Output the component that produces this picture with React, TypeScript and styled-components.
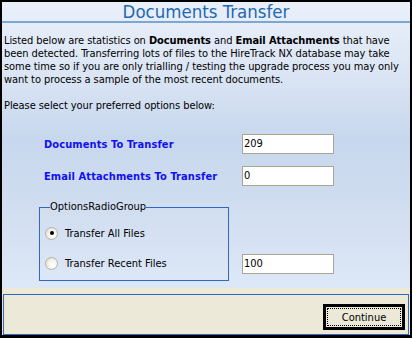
import React from "react";
import styled, { createGlobalStyle } from "styled-components";

const Global = createGlobalStyle`
  html, body { margin: 0; padding: 0; background: #000; }
  body { overflow: hidden; }
  * { box-sizing: border-box; }
`;

const FONT = `"DejaVu Sans Condensed", "Liberation Sans", sans-serif`;

const Window = styled.div`
  width: 412px;
  height: 338px;
  border-style: solid;
  border-color: #000;
  border-width: 2px 2px 3px 2px;
  display: flex;
  flex-direction: column;
  font-family: ${FONT};
  font-size: 11px;
  color: #000;
`;

const Main = styled.div`
  flex: 1;
  display: flex;
  flex-direction: column;
  background: linear-gradient(
    to bottom,
    #eaf0fa 0%,
    #dbe5f4 25%,
    #c7d7ed 48%,
    #d0ddf0 70%,
    #dde8f7 100%
  );
`;

const Header = styled.div`
  height: 19px;
  display: flex;
  align-items: center;
  justify-content: center;
  font-size: 18.5px;
  line-height: 19px;
  color: #2268b2;
`;

const Rule = styled.div`
  height: 2px;
  background: #7ba7d3;
`;

const Content = styled.div`
  flex: 1;
  padding: 11px 0 7px 2px;
  display: flex;
  flex-direction: column;
`;

const Para = styled.p`
  margin: 0;
  line-height: 13px;
  white-space: nowrap;
  letter-spacing: -0.07px;
`;

const Fields = styled.div`
  margin-top: 22px;
  display: grid;
  grid-template-columns: 198px 92px;
  row-gap: 12px;
  padding-left: 40px;
  align-items: center;
`;

const Label = styled.div`
  font-weight: bold;
  color: #1010f0;
  font-size: 11px;
  letter-spacing: 0.1px;
`;

const Input = styled.div`
  width: 92px;
  height: 20px;
  background: #fff;
  border: 1px solid #aaa493;
  padding: 0 1px;
  line-height: 18px;
  font-size: 11px;
`;

const OptionsRow = styled.div`
  margin-top: 14px;
  padding-left: 35px;
  display: flex;
  align-items: flex-end;
`;

const Group = styled.fieldset`
  margin: 0;
  width: 190px;
  border: 1px solid #3168c6;
  padding: 11px 0 9px 5px;
  display: flex;
  flex-direction: column;
  gap: 14px;
`;

const Legend = styled.legend`
  padding: 0;
  margin-left: 5px;
  line-height: 14px;
`;

const RadioRow = styled.label`
  display: flex;
  align-items: center;
  height: 16px;
  gap: 7px;
`;

const Radio = styled.span<{ $checked?: boolean }>`
  width: 13px;
  height: 13px;
  border-radius: 50%;
  border: 1px solid #b5b2a8;
  background: radial-gradient(circle at 65% 65%, #ffffff 0%, #f4f3ee 45%, #d8d6cc 100%);
  display: flex;
  align-items: center;
  justify-content: center;
  &::after {
    content: "";
    width: 4px;
    height: 4px;
    border-radius: 50%;
    background: ${(p) => (p.$checked ? "#000" : "transparent")};
  }
`;

const SideInput = styled(Input)`
  margin-left: 13px;
  margin-bottom: 7px;
`;

const Footer = styled.div`
  height: 47px;
  background: #ece9d8;
  padding: 6px 1px 0 1px;
  display: flex;
`;

const Panel = styled.div`
  flex: 1;
  border: 1px solid #3168c6;
  display: flex;
  justify-content: flex-end;
  align-items: flex-start;
  padding: 9px 3px 0 0;
`;

const Button = styled.button`
  position: relative;
  width: 82px;
  height: 26px;
  background: #ece9d8;
  border: 3px solid #000;
  font-family: ${FONT};
  font-size: 11px;
  font-weight: normal;
  color: #000;
  padding: 0;
  &::after {
    content: "";
    position: absolute;
    inset: 1px;
    border: 1px dotted #000;
  }
`;

export default function App() {
  return (
    <>
      <Global />
      <Window>
        <Main>
          <Header>Documents Transfer</Header>
          <Rule />
          <Content>
            <Para>
              Listed below are statistics on <b>Documents</b> and <b>Email Attachments</b> that have
              <br />
              been detected. Transferring lots of files to the HireTrack NX database may take
              <br />
              some time so if you are only trialling / testing the upgrade process you may only
              <br />
              want to process a sample of the most recent documents.
              <br />
              <br />
              Please select your preferred options below:
            </Para>
            <Fields>
              <Label>Documents To Transfer</Label>
              <Input>209</Input>
              <Label>Email Attachments To Transfer</Label>
              <Input>0</Input>
            </Fields>
            <OptionsRow>
              <Group>
                <Legend>OptionsRadioGroup</Legend>
                <RadioRow>
                  <Radio $checked />
                  Transfer All Files
                </RadioRow>
                <RadioRow>
                  <Radio />
                  Transfer Recent Files
                </RadioRow>
              </Group>
              <SideInput>100</SideInput>
            </OptionsRow>
          </Content>
        </Main>
        <Footer>
          <Panel>
            <Button>Continue</Button>
          </Panel>
        </Footer>
      </Window>
    </>
  );
}
